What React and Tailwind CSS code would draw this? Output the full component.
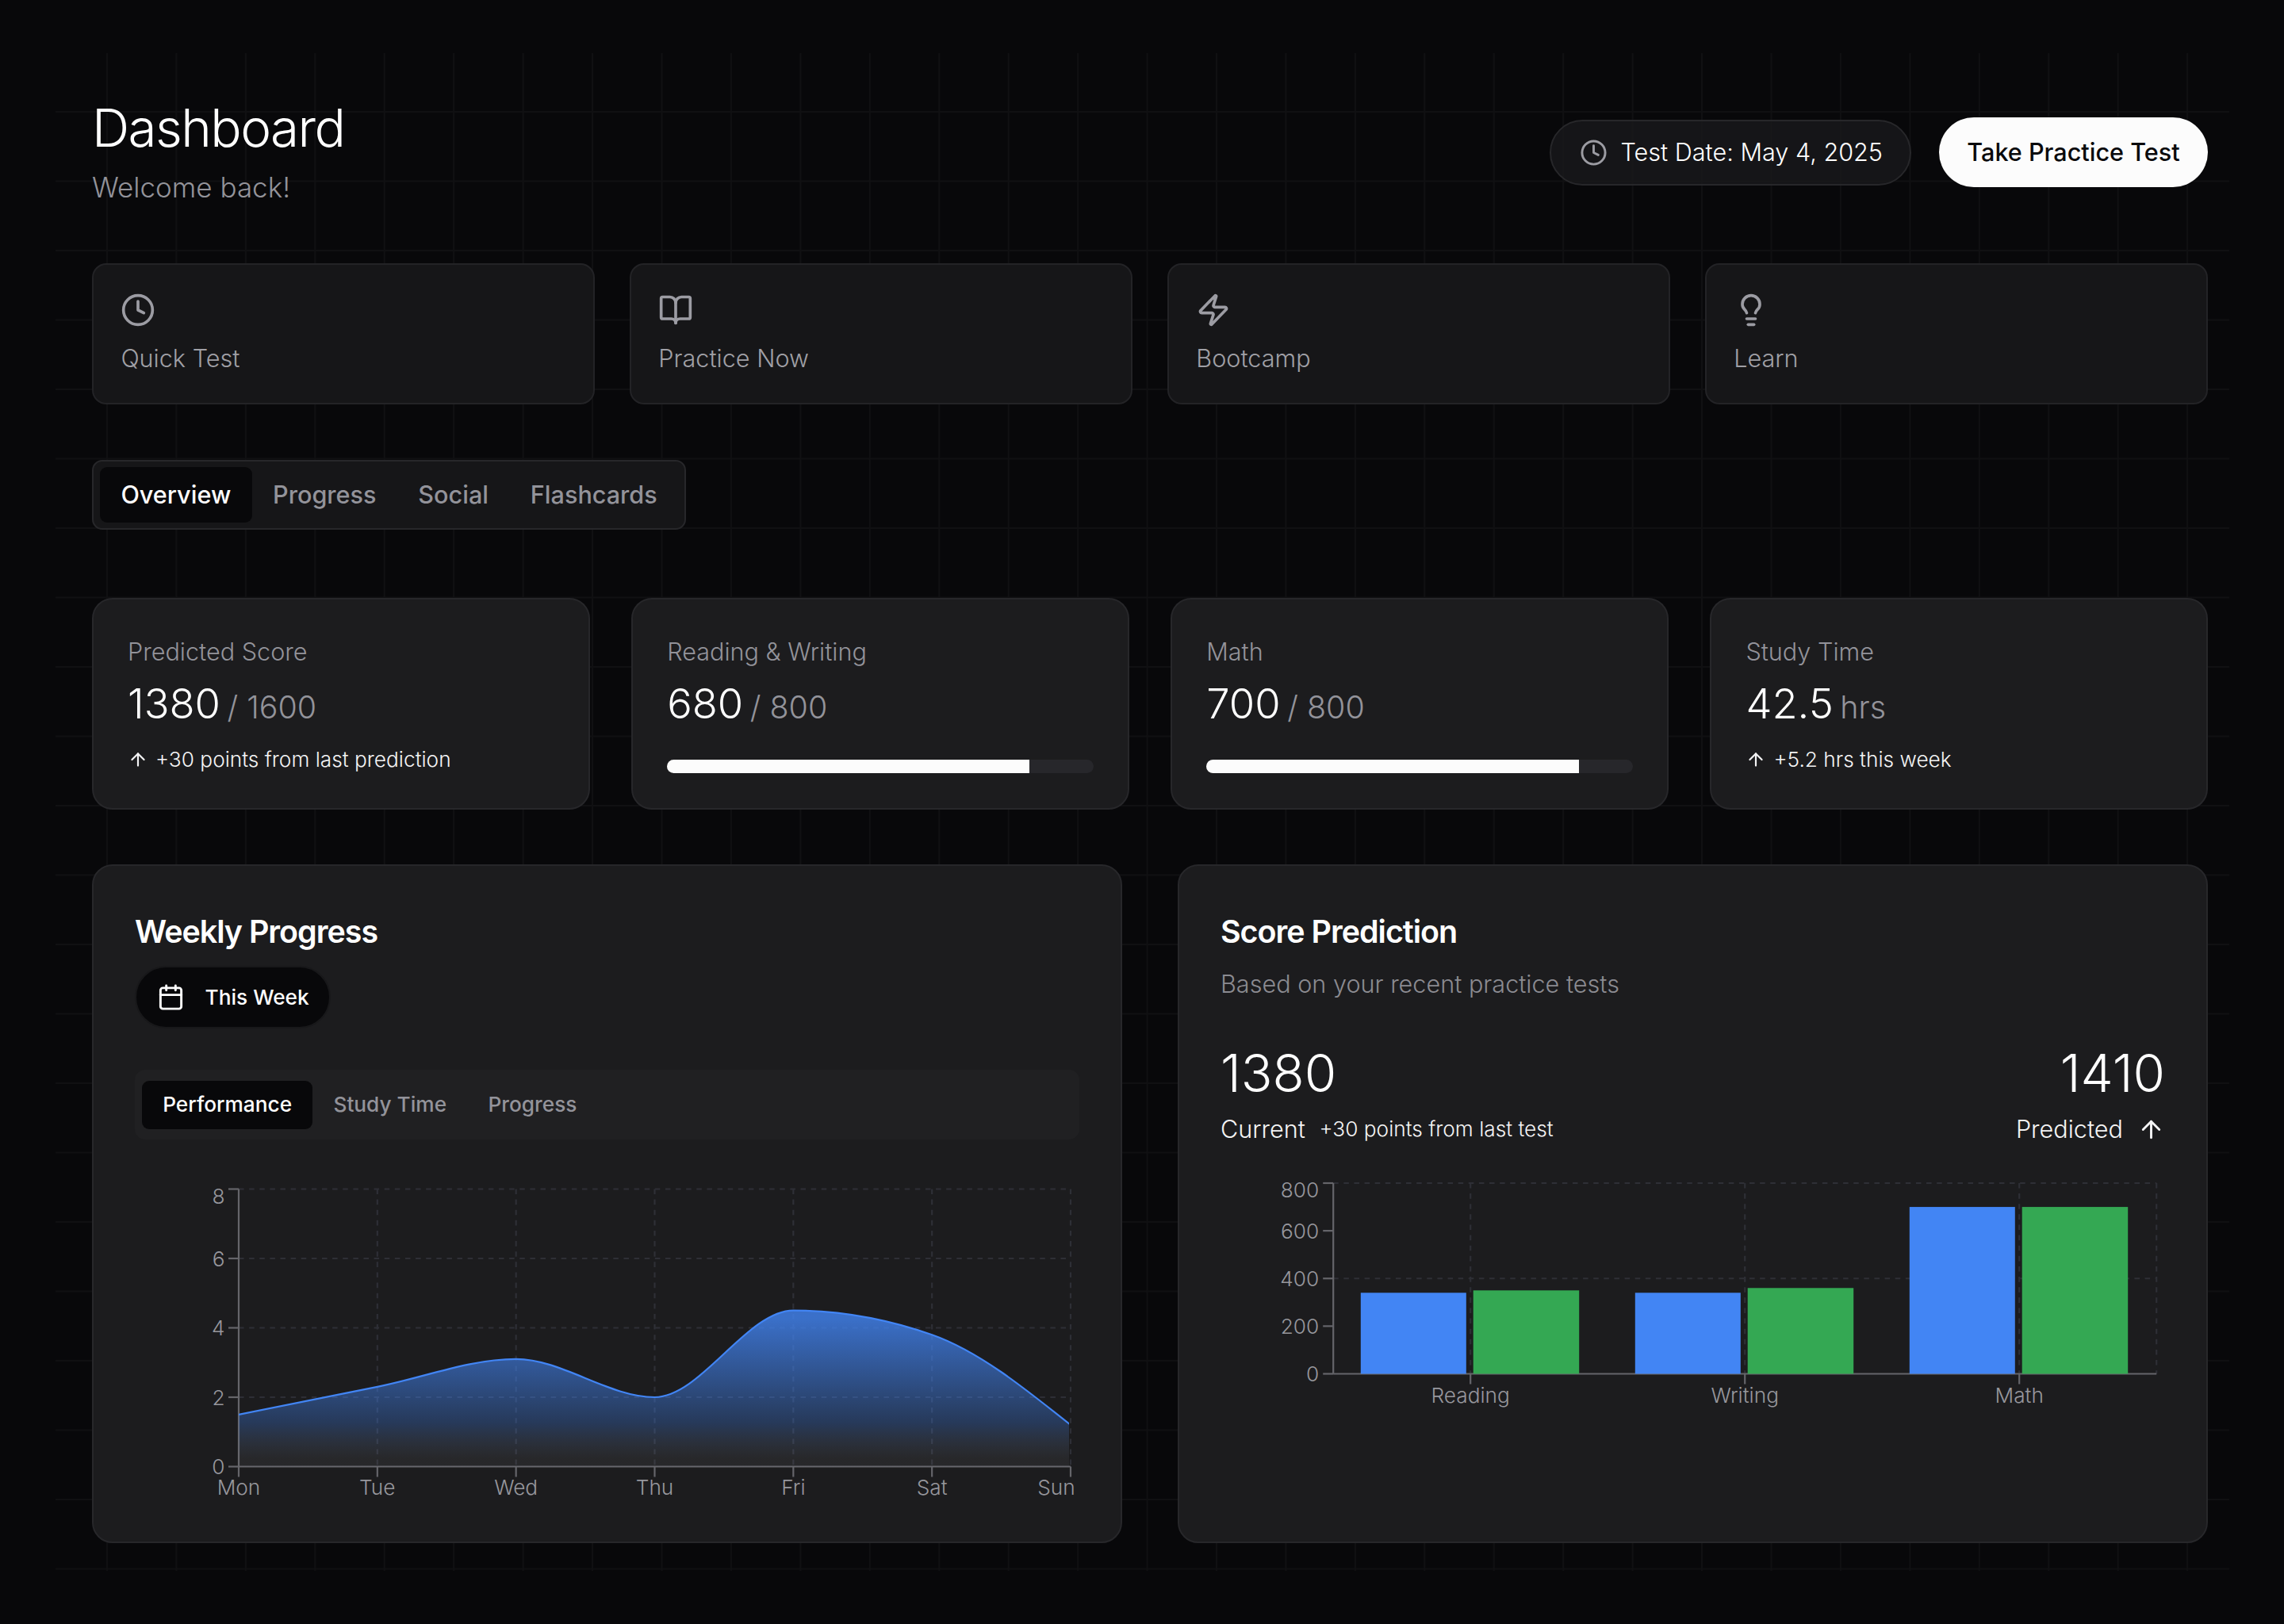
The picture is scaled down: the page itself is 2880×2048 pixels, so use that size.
import { BookOpen, Calendar, Clock, Lightbulb, Zap, ArrowUp } from 'lucide-react';

const quickLinks = [
  { label: 'Quick Test', icon: Clock },
  { label: 'Practice Now', icon: BookOpen },
  { label: 'Bootcamp', icon: Zap },
  { label: 'Learn', icon: Lightbulb },
];

const tabs = ['Overview', 'Progress', 'Social', 'Flashcards'];
const chartTabs = ['Performance', 'Study Time', 'Progress'];

const stats = [
  { label: 'Predicted Score', value: '1380', suffix: '/ 1600', note: '+30 points from last prediction' },
  { label: 'Reading & Writing', value: '680', suffix: '/ 800', progress: 85 },
  { label: 'Math', value: '700', suffix: '/ 800', progress: 87.3 },
  { label: 'Study Time', value: '42.5', suffix: 'hrs', note: '+5.2 hrs this week' },
];

const weekly = [
  { day: 'Mon', value: 1.5 },
  { day: 'Tue', value: 2.3 },
  { day: 'Wed', value: 3.1 },
  { day: 'Thu', value: 2 },
  { day: 'Fri', value: 4.5 },
  { day: 'Sat', value: 3.8 },
  { day: 'Sun', value: 1.2 },
];

const scores = [
  { name: 'Reading', current: 340, predicted: 350 },
  { name: 'Writing', current: 340, predicted: 360 },
  { name: 'Math', current: 700, predicted: 700 },
];

// Monotone cubic interpolation through evenly spaced points
function monotonePath(points) {
  const n = points.length;
  const slopes = [];
  for (let i = 0; i < n - 1; i++) {
    slopes.push((points[i + 1][1] - points[i][1]) / (points[i + 1][0] - points[i][0]));
  }
  const t = points.map((_, i) => {
    if (i === 0 || i === n - 1) return 0;
    const a = slopes[i - 1];
    const b = slopes[i];
    return (Math.sign(a) + Math.sign(b)) * Math.min(Math.abs(a), Math.abs(b), 0.25 * Math.abs(a + b)) || 0;
  });
  t[0] = (3 * slopes[0] - t[1]) / 2;
  t[n - 1] = (3 * slopes[n - 2] - t[n - 2]) / 2;

  let d = `M${points[0][0]},${points[0][1]}`;
  for (let i = 0; i < n - 1; i++) {
    const [x0, y0] = points[i];
    const [x1, y1] = points[i + 1];
    const dx = (x1 - x0) / 3;
    d += `C${x0 + dx},${y0 + dx * t[i]},${x1 - dx},${y1 - dx * t[i + 1]},${x1},${y1}`;
  }
  return d;
}

function WeeklyChart() {
  const left = 131;
  const right = 1180;
  const top = 10.5;
  const bottom = 360.5;
  const step = (right - left) / 6;
  const points = weekly.map((d, i) => [left + i * step, bottom - (d.value / 8) * (bottom - top)]);
  const line = monotonePath(points);
  const ticks = [0, 2, 4, 6, 8];

  return (
    <svg width="1191" height="410" className="block overflow-visible">
      <defs>
        <linearGradient id="area" x1="0" y1="0" x2="0" y2="1">
          <stop offset="5%" stopColor="#4285f4" stopOpacity="0.8" />
          <stop offset="72%" stopColor="#4285f4" stopOpacity="0.28" />
          <stop offset="95%" stopColor="#84868c" stopOpacity="0.11" />
        </linearGradient>
        <clipPath id="reveal">
          <rect x={left} y="0" width={right - left - 2} height={bottom + 5} />
        </clipPath>
      </defs>
      <g stroke="#2e2f36" strokeWidth="2.2" strokeDasharray="6.56 6.56">
        {ticks.slice(1).map((v) => {
          const y = bottom - (v / 8) * (bottom - top);
          return <line key={v} x1={left} x2={right} y1={y} y2={y} />;
        })}
        {points.slice(1).map(([x]) => (
          <line key={x} x1={x} x2={x} y1={top} y2={bottom} />
        ))}
      </g>
      <g stroke="#65656a" strokeWidth="2.2">
        <line x1={left} x2={left} y1={top} y2={bottom} />
        <line x1={left} x2={right} y1={bottom} y2={bottom} />
        {ticks.map((v) => {
          const y = bottom - (v / 8) * (bottom - top);
          return <line key={v} x1={left - 13} x2={left} y1={y} y2={y} />;
        })}
        {points.map(([x]) => (
          <line key={x} x1={x} x2={x} y1={bottom} y2={bottom + 13} />
        ))}
      </g>
      <g clipPath="url(#reveal)">
        <path d={`${line}L${right},${bottom}L${left},${bottom}Z`} fill="url(#area)" />
        <path d={line} fill="none" stroke="#4285f4" strokeWidth="2.2" />
      </g>
      <g fill="#97979d" fontSize="26.25" fontWeight="300">
        {ticks.map((v) => (
          <text key={v} x={left - 17.5} y={v === 8 ? 29 : bottom - (v / 8) * (bottom - top) + 9.5} textAnchor="end">
            {v}
          </text>
        ))}
        {weekly.map((d, i) => (
          <text key={d.day} x={i === 6 ? 1162 : points[i][0]} y={bottom + 35.5} textAnchor="middle">
            {d.day}
          </text>
        ))}
      </g>
    </svg>
  );
}

function ScoreChart() {
  const left = 142.2;
  const right = 1180.2;
  const top = 11;
  const bottom = 251.5;
  const band = (right - left) / 3;
  const y = (v) => bottom - (v / 800) * (bottom - top);

  return (
    <svg width="1190" height="310" className="block overflow-visible">
      <g stroke="#2e2f36" strokeWidth="2.2" strokeDasharray="6.56 6.56">
        {[400, 800].map((v) => (
          <line key={v} x1={left} x2={right} y1={y(v)} y2={y(v)} />
        ))}
        {[0.5, 1.5, 2.5, 3].map((n) => (
          <line key={n} x1={left + n * band} x2={left + n * band} y1={top} y2={bottom} />
        ))}
      </g>
      <g stroke="#65656a" strokeWidth="2.2">
        <line x1={left} x2={left} y1={top} y2={bottom} />
        <line x1={left} x2={right} y1={bottom} y2={bottom} />
        {[0, 200, 400, 600, 800].map((v) => (
          <line key={v} x1={left - 13} x2={left} y1={y(v)} y2={y(v)} />
        ))}
        {[0.5, 1.5, 2.5].map((n) => (
          <line key={n} x1={left + n * band} x2={left + n * band} y1={bottom} y2={bottom + 13} />
        ))}
      </g>
      {scores.map((s, i) => (
        <g key={s.name}>
          <rect x={left + i * band + 34.6} y={y(s.current)} width="133" height={bottom - y(s.current)} fill="#4285f4" />
          <rect x={left + i * band + 176.5} y={y(s.predicted)} width="133.5" height={bottom - y(s.predicted)} fill="#34a853" />
        </g>
      ))}
      <g fill="#97979d" fontSize="26.25" fontWeight="300">
        {[0, 200, 400, 600, 800].map((v) => (
          <text key={v} x={left - 18} y={v === 800 ? 29 : y(v) + 9.5} textAnchor="end">
            {v}
          </text>
        ))}
        {scores.map((s, i) => (
          <text key={s.name} x={left + (i + 0.5) * band} y={bottom + 36} textAnchor="middle">
            {s.name}
          </text>
        ))}
      </g>
    </svg>
  );
}

function StatCard({ stat }) {
  return (
    <div className="h-[267px] rounded-[26px] border-2 border-[#27272a] bg-[#1c1c1e] px-[43px] pt-[44px]">
      <div className="text-[30.6px] leading-[44px] font-light text-[#93939a]">{stat.label}</div>
      <div className="mt-[8px] flex items-baseline leading-[70px] font-light whitespace-pre">
        <span className="text-[52.5px] text-white">{stat.value}</span>
        <span className="ml-[8.5px] text-[39.4px] text-[#93939a]">{stat.suffix}</span>
      </div>
      {stat.progress ? (
        <div className="mt-[30.5px] h-[17.5px] overflow-hidden rounded-full bg-[#27272b]">
          <div className="h-full bg-[#fcfcfc]" style={{ width: `${stat.progress}%` }} />
        </div>
      ) : (
        <div className="mt-[13px] flex items-center text-[26.25px] leading-[35px] font-light text-[#f4f4f5]">
          <ArrowUp size={26} strokeWidth={2} className="mr-[9px]" />
          {stat.note}
        </div>
      )}
    </div>
  );
}

export default function App() {
  return (
    <div className="relative h-[2048px] w-[2880px] overflow-hidden bg-[#08080a] pr-[96px] pl-[116px] pt-[119px] font-[Inter,sans-serif] text-white">
      {/* faint background grid */}
      <div className="absolute top-[67px] left-[70px] h-[1914px] w-[2741px] bg-[linear-gradient(to_right,#101012_2px,transparent_2px),linear-gradient(to_bottom,#101012_2px,transparent_2px)] bg-[size:87.45px_87.5px] bg-[position:64px_73px]" />

      <div className="relative">
        <header className="flex h-[150px] items-start justify-between">
          <div>
            <h1 className="mt-[3px] text-[65.6px] leading-[79px] font-light tracking-[-1.6px]">Dashboard</h1>
            <p className="mt-[13px] text-[35px] leading-[44px] font-light text-[#93939a]">Welcome back!</p>
          </div>
          <div className="mt-[29px] flex items-center gap-[35px]">
            <div className="flex h-[83px] w-[456px] items-center rounded-full border-2 border-[#27272a] bg-[#19191b]/80 pl-[35.5px] text-[30.6px] font-light">
              <Clock size={35} className="mr-[17px] text-[#9c9ca3]" />
              Test Date: May 4, 2025
            </div>
            <button className="flex h-[88px] w-[339px] items-center justify-center rounded-full bg-[#fcfcfc] text-[30.6px] font-medium text-[#0a0a0c]">
              Take Practice Test
            </button>
          </div>
        </header>

        <div className="mt-[63px] grid grid-cols-4 gap-[43.75px]">
          {quickLinks.map(({ label, icon: Icon }) => (
            <div key={label} className="h-[178px] rounded-[18px] border-2 border-[#232326] bg-[#161618] px-[34.4px] pt-[34.5px]">
              <Icon size={44} className="text-[#9c9ca3]" />
              <div className="mt-[17.5px] text-[30.6px] leading-[44px] font-light text-[#a0a0a6]">{label}</div>
            </div>
          ))}
        </div>

        <div className="mt-[70px] flex h-[88px] w-[749px] items-center rounded-[13px] border-2 border-[#27272a] bg-[#161618] px-[8px]">
          {tabs.map((tab, i) => (
            <div
              key={tab}
              className={`flex h-[70px] items-center rounded-[9px] px-[26.4px] text-[30.6px] font-medium ${i === 0 ? 'bg-[#08080a] text-white' : 'text-[#93939a]'}`}
            >
              {tab}
            </div>
          ))}
        </div>

        <div className="mt-[86px] grid grid-cols-4 gap-[52.5px]">
          {stats.map((stat) => (
            <StatCard key={stat.label} stat={stat} />
          ))}
        </div>

        <div className="mt-[69px] grid grid-cols-2 gap-[70px]">
          <div className="h-[856px] rounded-[26px] border-2 border-[#27272a] bg-[#1c1c1e] px-[52px] pt-[61px]">
            <h2 className="text-[39.4px] leading-[44px] font-semibold tracking-[-1px]">Weekly Progress</h2>
            <button className="mt-[21px] flex h-[79px] w-[247px] items-center rounded-full border-2 border-[#18181a] bg-[#08080a] pl-[25.5px] text-[26.25px] font-medium">
              <Calendar size={35} className="mr-[26px]" />
              This Week
            </button>
            <div className="mt-[52px] flex h-[88px] items-center rounded-[13px] bg-[#202022] px-[9px]">
              {chartTabs.map((tab, i) => (
                <div
                  key={tab}
                  className={`flex h-[61px] items-center rounded-[9px] px-[26.2px] text-[26.25px] font-medium ${i === 0 ? 'bg-[#08080a] text-white' : 'text-[#93939a]'}`}
                >
                  {tab}
                </div>
              ))}
            </div>
            <div className="mt-[52px]">
              <WeeklyChart />
            </div>
          </div>

          <div className="h-[856px] rounded-[26px] border-2 border-[#27272a] bg-[#1c1c1e] px-[52px] pt-[61px]">
            <h2 className="text-[39.4px] leading-[44px] font-semibold tracking-[-1px]">Score Prediction</h2>
            <p className="mt-[22px] text-[30.6px] leading-[44px] font-light text-[#8b8b91]">Based on your recent practice tests</p>
            <div className="mt-[51px] flex justify-between text-[65.6px] leading-[79px] font-light">
              <span>1380</span>
              <span>1410</span>
            </div>
            <div className="mt-[9px] flex items-center justify-between text-[30.6px] leading-[44px] font-light text-[#f4f4f5]">
              <div className="flex items-center gap-[17.5px]">
                Current
                <span className="text-[26.25px]">+30 points from last test</span>
              </div>
              <div className="flex items-center gap-[18px]">
                Predicted
                <ArrowUp size={35} />
              </div>
            </div>
            <div className="mt-[35px]">
              <ScoreChart />
            </div>
          </div>
        </div>
      </div>
    </div>
  );
}
